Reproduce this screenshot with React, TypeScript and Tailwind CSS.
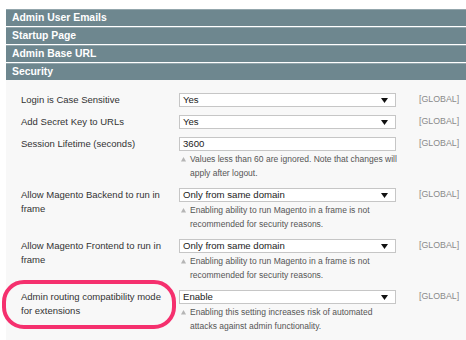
import React from "react";

const F = { fontFamily: '"Liberation Sans", Arial, sans-serif' };

function Header({ title }: { title: string }) {
  return (
    <div className="h-[17px] bg-[#6e878f] border-t border-[#93a6ac] flex items-center pl-[6px] text-white font-bold text-[10.4px] leading-none">
      {title}
    </div>
  );
}

function Arrow() {
  return (
    <svg width="7" height="5" viewBox="0 0 7 5" className="absolute right-[7px] top-[4px]">
      <path d="M0 0 H7 L3.5 5 Z" fill="#111" />
    </svg>
  );
}

function Note({ lines }: { lines: string[] }) {
  return (
    <div className="flex mt-[1px] pl-[2px] text-[8.5px] leading-[14px] text-[#555]">
      <svg width="5" height="5" viewBox="0 0 5 5" className="mt-[5px] shrink-0">
        <path d="M2.5 0 L5 4.5 H0 Z" fill="#b5b5b5" />
      </svg>
      <span className="ml-[4px] w-[214px] shrink-0 whitespace-nowrap">
        {lines.map((l, i) => (
          <div key={i}>{l}</div>
        ))}
      </span>
    </div>
  );
}

function Row({
  label,
  value,
  select = true,
  note,
  highlight = false,
}: {
  label: string;
  value: string;
  select?: boolean;
  note?: string[];
  highlight?: boolean;
}) {
  return (
    <div className="flex pl-[15px] mb-[8px]">
      <div className="relative w-[158px] pr-[10px] text-[9.5px] leading-[14px] text-[#333]">
        {highlight && (
          <div className="absolute left-[-19px] top-[-10px] w-[174px] h-[49px] border-[4px] border-[#f5306e] rounded-[22px]" />
        )}
        {label}
      </div>
      <div className="w-[217px]">
        <div className="relative h-[14px] bg-white border border-[#c6c6c6] pl-[3px] text-[9.6px] leading-[12px] text-[#222]">
          {value}
          {select && <Arrow />}
        </div>
        {note && <Note lines={note} />}
      </div>
      <div className="ml-[23px] h-[14px] flex items-center text-[8.8px] text-[#8a8a8a]">[GLOBAL]</div>
    </div>
  );
}

export default function App() {
  return (
    <div style={F} className="w-[466px] h-[340px] bg-white overflow-hidden pt-[9px]">
      <div className="ml-[6px] flex flex-col gap-[1px]">
        <Header title="Admin User Emails" />
        <Header title="Startup Page" />
        <Header title="Admin Base URL" />
        <Header title="Security" />
      </div>
      <div className="ml-[6px] bg-[#f8f8f8] h-[270px] pt-[13px]">
        <Row label="Login is Case Sensitive" value="Yes" />
        <Row label="Add Secret Key to URLs" value="Yes" />
        <Row
          label="Session Lifetime (seconds)"
          value="3600"
          select={false}
          note={["Values less than 60 are ignored. Note that changes will", "apply after logout."]}
        />
        <Row
          label="Allow Magento Backend to run in frame"
          value="Only from same domain"
          note={["Enabling ability to run Magento in a frame is not", "recommended for security reasons."]}
        />
        <Row
          label="Allow Magento Frontend to run in frame"
          value="Only from same domain"
          note={["Enabling ability to run Magento in a frame is not", "recommended for security reasons."]}
        />
        <Row
          label="Admin routing compatibility mode for extensions"
          value="Enable"
          highlight
          note={["Enabling this setting increases risk of automated", "attacks against admin functionality."]}
        />
      </div>
    </div>
  );
}
